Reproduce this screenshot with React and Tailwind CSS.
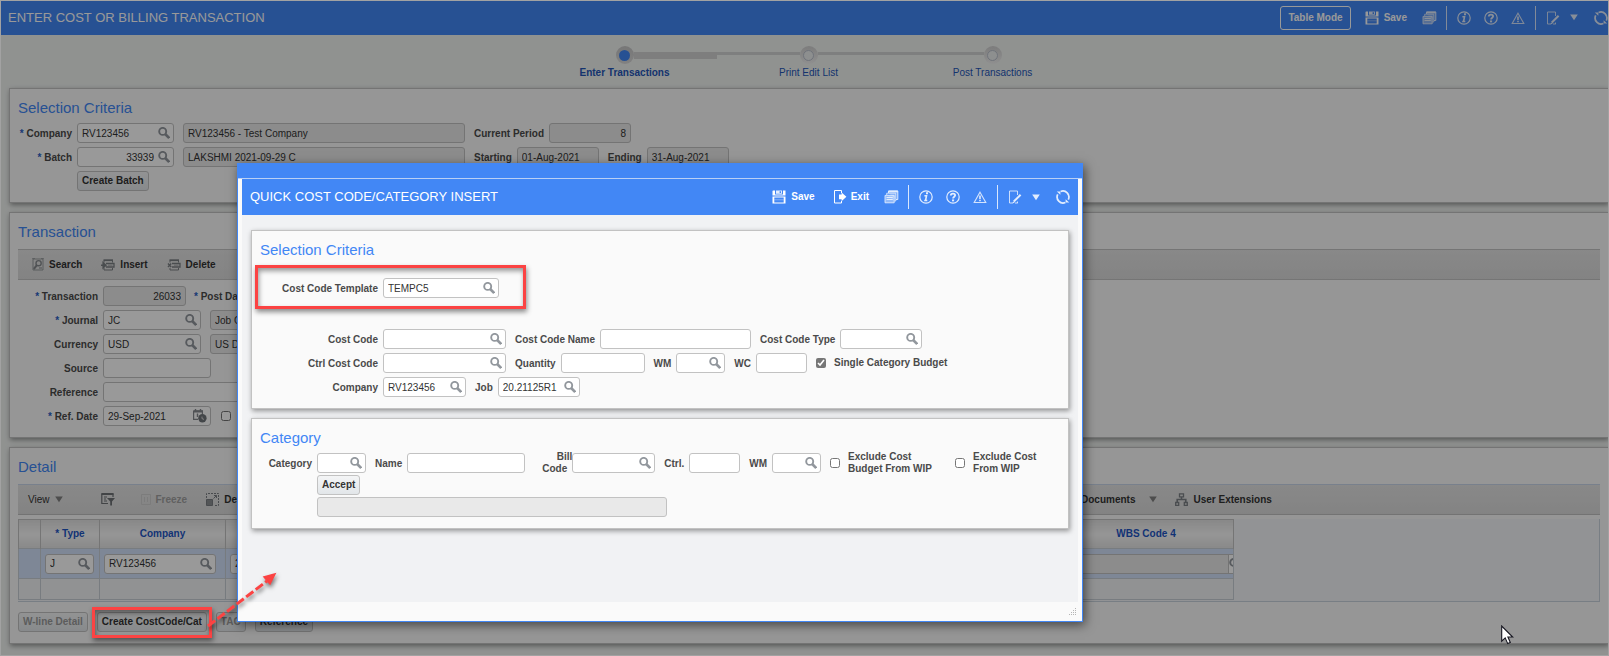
import React, { useId } from "react";

/* ---------- icons ---------- */

function SearchIcon() {
  return (
    <svg width="12" height="12" viewBox="0 0 12 12" fill="none" stroke="#92979d" aria-hidden="true">
      <circle cx="4.7" cy="4.4" r="3.5" strokeWidth="1.9" />
      <path d="M7.2 7 L11.2 11" strokeWidth="2.600" />
    </svg>
  );
}

function SaveIcon() {
  return (
    <svg width="14" height="14" viewBox="0 0 14 14" fill="currentColor" aria-hidden="true">
      <path d="M0.500 1 L1 0.500 H3 V4.6 H11 V0.500 H13.500 V5.6 H0.500 Z" />
      <path d="M4 0.500 H10 V3.8 H4 Z M7.6 1.2 V3 H9 V1.2 Z" fillRule="evenodd" opacity="0.85" />
      <path d="M0.500 6.6 H13.500 V13.500 H0.500 Z M2.3 7.6 V12.4 H11.700 V7.6 Z" fillRule="evenodd" />
      <path d="M2.3 9.3 H11.700 V10.3 H2.3 Z" opacity="0.35" />
    </svg>
  );
}

function ExitIcon() {
  return (
    <svg width="14" height="14" viewBox="0 0 14 14" aria-hidden="true">
      <path d="M8.5 3 V0.5 H1.5 V13 H8.5 V11" fill="none" stroke="currentColor" strokeWidth="1" />
      <path d="M6 4.4 H8.6 V2.4 L13.4 6.8 L8.6 11.2 V9.2 H6 Z" fill="currentColor" />
    </svg>
  );
}

function StackIcon() {
  return (
    <svg width="15" height="14" viewBox="0 0 15 14" fill="none" stroke="currentColor" aria-hidden="true">
      <path d="M4.5 3 V1 H13.8 V9.5 H12" fill="currentColor" fillOpacity="0.25" />
      <path d="M4.5 1.5 H13.8" strokeWidth="1.8" />
      <path d="M2.700 5 V3.2 H11.800 V11 H10.500" fill="currentColor" fillOpacity="0.2" strokeOpacity="0.8" />
      <path d="M1 5.4 H10.2 V12.8 H1 Z" fill="currentColor" fillOpacity="0.5" strokeOpacity="0.85" />
      <path d="M2.500 7.5 H8.8 M2.500 9.5 H8.8" />
    </svg>
  );
}

function InfoIcon() {
  return (
    <svg width="14" height="14" viewBox="0 0 14 14" fill="none" stroke="currentColor" aria-hidden="true">
      <circle cx="7" cy="7" r="6.2" strokeWidth="1.2" />
      <path d="M5.4 5.7 H7.5 L6.6 10.4 M5.2 10.5 H8.300" strokeWidth="1.6" />
      <path d="M7 3.300 H9" strokeWidth="2" />
    </svg>
  );
}

function HelpIcon() {
  return (
    <svg width="14" height="14" viewBox="0 0 14 14" fill="none" stroke="currentColor" aria-hidden="true">
      <circle cx="7" cy="7" r="6.2" strokeWidth="1.2" />
      <path d="M4.8 5.600 C4.8 3 9.2 3.1 9.1 5.3 C9.1 6.8 7.1 6.6 7.1 8.6" strokeWidth="1.9" />
      <path d="M6 10.4 H8.1" strokeWidth="1.9" />
    </svg>
  );
}

function WarnIcon() {
  return (
    <svg width="14" height="14" viewBox="0 0 14 14" fill="none" stroke="currentColor" aria-hidden="true">
      <path d="M7 2.2 L12.800 12.5 H1.2 Z" strokeWidth="1.1" strokeOpacity="0.9" />
      <path d="M7 5.6 V9.2 M7 10 V11.3" strokeWidth="1.6" />
    </svg>
  );
}

function EditIcon() {
  return (
    <svg width="14" height="14" viewBox="0 0 14 14" fill="none" stroke="currentColor" aria-hidden="true">
      <path d="M9.5 5 V1 H1.500 V13 H5 M9.5 13 V11.5 M7 13 H9.8" strokeWidth="1" strokeOpacity="0.85" />
      <path d="M5.8 11.5 L12.6 4.700" strokeWidth="2" />
      <path d="M4.8 12.6 L6.4 12" strokeWidth="1.2" />
    </svg>
  );
}

function CaretIcon() {
  return (
    <svg width="8" height="7" viewBox="0 0 8 7" fill="currentColor" aria-hidden="true">
      <path d="M0.2 0.5 H7.8 L4 6.3 Z" />
    </svg>
  );
}

function RefreshIcon() {
  return (
    <svg width="14" height="14" viewBox="0 0 14 14" fill="none" stroke="currentColor" aria-hidden="true">
      <path d="M4.600 1.5 A6 6 0 0 1 12.3 9.6" strokeWidth="1.7" />
      <path d="M9.400 12.5 A6 6 0 0 1 1.7 4.4" strokeWidth="1.7" />
      <path d="M0.8 1.4 H4.4 V4.8 Z M13.200 12.6 H9.6 V9.2 Z" fill="currentColor" stroke="none" />
    </svg>
  );
}

function FindIcon() {
  return (
    <svg width="12" height="13" viewBox="0 0 12 13" fill="none" stroke="#85898d" aria-hidden="true">
      <path d="M1 1 H11 V12 H1 Z" strokeOpacity="0.8" />
      <path d="M0 0.500 H3 M9 0.500 H12" strokeOpacity="0.6" />
      <circle cx="6.6" cy="5.2" r="2.6" strokeWidth="1.4" />
      <path d="M4.9 7.2 L1.8 11" strokeWidth="2" />
      <path d="M7 10 H10" />
    </svg>
  );
}

function RowsIcon({ remove }) {
  return (
    <svg width="14" height="12" viewBox="0 0 14 12" fill="none" stroke="#7c8084" aria-hidden="true">
      <path d="M3 3.5 V1.5 H11.5 V3.5 M3 9 V11 H11.5 V9" />
      <path d="M2.5 1.2 H12" strokeWidth="1.8" />
      <path d="M5 4.5 H13 V8 H5" strokeWidth="1.3" />
      <path d="M7 6.2 H11.500" strokeOpacity="0.6" />
      {remove ? <path d="M1 4.500 L4.200 8 M4.200 4.500 L1 8" strokeWidth="1.4" /> : <path d="M0 6.2 H4 M2.200 3.8 L4.8 6.2 L2.200 8.6 Z" strokeWidth="1.6" />}
    </svg>
  );
}

function FilterIcon() {
  return (
    <svg width="14" height="13" viewBox="0 0 14 13" fill="none" stroke="#6e7276" aria-hidden="true">
      <path d="M12 4 V1 H0.8 V10.5 H7" strokeWidth="1.2" />
      <path d="M0.5 1 H12.5" strokeWidth="2" />
      <path d="M3 4 H6 M3 6 H5 M3 8 H6" />
      <path d="M6 5 H14 L11 8.5 V12.5 H9.2 V8.5 Z" fill="#6e7276" stroke="none" />
    </svg>
  );
}

function FreezeIcon() {
  return (
    <svg width="10" height="11" viewBox="0 0 10 11" fill="none" stroke="#cfcfcf" aria-hidden="true">
      <path d="M0.5 0.5 H9.5 V10.5 H0.5 Z M3.5 3 V8 M6.5 3 V8" />
    </svg>
  );
}

function DetachIcon() {
  return (
    <svg width="13" height="13" viewBox="0 0 13 13" fill="none" stroke="#7a7e82" aria-hidden="true">
      <path d="M0.5 5 V0.5 H12.5 V12.5 H8" strokeDasharray="2 1" />
      <path d="M0.5 6.5 H6.5 V12.5 H0.5 Z" fill="#8a8e92" />
      <path d="M7.5 5.5 L10.5 2.5 M8 2.5 H10.5 V5" />
    </svg>
  );
}

function TreeIcon() {
  return (
    <svg width="13" height="13" viewBox="0 0 13 13" fill="none" stroke="#7c8085" aria-hidden="true">
      <path d="M4.5 0.8 H8.5 V3.8 H4.5 Z M0.7 9.5 H3.7 V12.4 H0.7 Z M9.3 9.5 H12.3 V12.4 H9.3 Z" strokeWidth="1.3" />
      <path d="M6.5 4 V6.5 M2.200 9 V6.5 H10.800 V9" strokeWidth="1.6" />
    </svg>
  );
}

function CalendarIcon() {
  return (
    <svg width="14" height="14" viewBox="0 0 14 14" fill="none" stroke="#85898e" aria-hidden="true">
      <path d="M0.6 1.8 H9.4 V5 M0.6 1.8 V10.4 H5" strokeWidth="1.2" />
      <path d="M0.5 2.5 H9.5" strokeWidth="1.8" />
      <path d="M2.5 0 V2 M7.5 0 V2 M4.5 4.5 V8" strokeWidth="1.4" />
      <circle cx="9.4" cy="9.300" r="4.2" fill="#70757a" stroke="none" />
      <path d="M9 7.6 V9.600 L11 10.4" stroke="#d8d8d8" />
    </svg>
  );
}

/* ---------- form parts ---------- */

const boxBase = "flex h-5 shrink-0 items-center overflow-hidden rounded-[3px] border border-[#c2c2c2]";

function Box({ id, label, width, value = "", icon, readOnly, alignRight }) {
  return (
    <div className={`${boxBase} ${width} ${readOnly ? "bg-[#e9e9e9]" : "bg-white"}`}>
      <input
        id={id}
        aria-label={label}
        defaultValue={value}
        readOnly={readOnly}
        className={`h-full w-full min-w-0 flex-1 bg-transparent px-1 text-[10px] text-[#333] outline-none ${alignRight ? "text-right" : ""}`}
      />
      {icon && (
        <button type="button" aria-label="Look up" className="mr-[3px] shrink-0">
          {icon === "date" ? <CalendarIcon /> : <SearchIcon />}
        </button>
      )}
    </div>
  );
}

function Field({ label, labelWidth = "", required, ...box }) {
  const id = useId();
  return (
    <div className="flex shrink-0 items-center gap-[5px]">
      <label htmlFor={id} className={`pt-px text-right font-bold whitespace-nowrap text-[#4a4a4a] ${labelWidth}`}>
        {required && <span className="text-[#2b5fc4]">* </span>}
        {label}
      </label>
      <Box id={id} {...box} />
    </div>
  );
}

function Check({ label, name, checked, width = "" }) {
  const id = useId();
  return (
    <div className="flex shrink-0 items-center gap-2">
      <input id={id} type="checkbox" aria-label={name} defaultChecked={checked} className="size-[10px] accent-[#767676]" />
      {label && (
        <label htmlFor={id} className={`leading-3 font-bold text-[#4a4a4a] ${width}`}>
          {label}
        </label>
      )}
    </div>
  );
}

function PushButton({ children, faded }) {
  return (
    <button
      type="button"
      className={`h-5 shrink-0 rounded-[3px] border border-[#c2c2c2] bg-linear-to-b from-[#f4f5f6] to-[#e2e6e9] px-1 font-bold whitespace-nowrap ${faded ? "text-[#9a9a9a]" : "text-[#333]"}`}
    >
      {children}
    </button>
  );
}

function Panel({ title, edge = "border", children }) {
  return (
    <section className={`${edge} border-[#c2c2c2] bg-[#fafafa] px-2 pt-[9px] pb-[11px] shadow-[1px_2px_5px_rgba(0,0,0,0.4)]`}>
      <h2 className="h-5 text-[15px] leading-5 text-[#4287f5]">{title}</h2>
      {children}
    </section>
  );
}

function IconButton({ label, children }) {
  return (
    <button type="button" aria-label={label} className="shrink-0 opacity-85">
      {children}
    </button>
  );
}

function Divider() {
  return <span className="h-6 w-px shrink-0 bg-white/80" />;
}

function HeaderTools() {
  return (
    <>
      <IconButton label="Records">
        <StackIcon />
      </IconButton>
      <span className="w-[9px]" />
      <Divider />
      <span className="w-[10px]" />
      <div className="flex items-center gap-[13px]">
        <IconButton label="Information">
          <InfoIcon />
        </IconButton>
        <IconButton label="Help">
          <HelpIcon />
        </IconButton>
        <IconButton label="Warnings">
          <WarnIcon />
        </IconButton>
      </div>
      <span className="w-[10px]" />
      <Divider />
      <span className="w-[10px]" />
      <IconButton label="Edit">
        <EditIcon />
      </IconButton>
      <span className="w-[10px]" />
      <IconButton label="More">
        <CaretIcon />
      </IconButton>
      <span className="w-4" />
      <IconButton label="Refresh">
        <RefreshIcon />
      </IconButton>
    </>
  );
}

function ToolItem({ icon, children, faded }) {
  return (
    <button type="button" className={`flex items-center gap-[5px] font-bold whitespace-nowrap ${faded ? "text-[#a0a0a0]" : "text-[#333]"}`}>
      {icon}
      {children}
    </button>
  );
}

/* ---------- page parts ---------- */

function Step({ label, current, left, right }) {
  return (
    <li className="w-[184px] text-center">
      <div className="flex h-[18px] items-center">
        <span className={`flex-1 ${left}`} />
        <span
          className={`flex size-[18px] items-center justify-center rounded-full bg-linear-to-b ${current ? "from-[#c6c6c6] to-[#d8d8d8]" : "from-[#cfcfcf] to-[#efefef]"}`}
        >
          <span className={current ? "size-[11px] rounded-full bg-[#4287f5]" : "size-[11px] rounded-full border border-[#b9c0cc] bg-[#eceeef]"} />
        </span>
        <span className={`flex-1 ${right}`} />
      </div>
      <a href="#" className={`block pt-px leading-4 text-[#2456b8] ${current ? "font-bold" : ""}`}>
        {label}
      </a>
    </li>
  );
}

function Stepper() {
  const thin = "mb-1 h-[3px] bg-[#d2d4d4]";
  return (
    <ol className="flex h-[53px] justify-center pt-[11px] pl-2">
      <Step label="Enter Transactions" current left="" right="h-[7px] bg-[#d2d2d2]" />
      <Step label="Print Edit List" left={thin} right={thin} />
      <Step label="Post Transactions" left={thin} right="" />
    </ol>
  );
}

function DetailTable() {
  const head = "border-x border-[#c4c4c4] bg-linear-to-b from-[#e4e4e4] via-[#fafafa] to-[#e4e4e4] text-center font-bold text-[#1d55c4]";
  const cell = "border border-[#c9cfd6] px-1 py-0";
  return (
    <div className="mt-1 h-[83px] border-r border-b border-[#c9d2dc] bg-[#f4f6f8]">
      <table className="w-[1215px] table-fixed border-collapse border border-[#c4c4c4]">
        <colgroup>
          <col className="w-[22px]" />
          <col className="w-[59px]" />
          <col className="w-[126px]" />
          <col className="w-[833px]" />
          <col className="w-[175px]" />
        </colgroup>
        <thead>
          <tr className="h-[29px]">
            <th className={head} />
            <th className={head}>* Type</th>
            <th className={head}>Company</th>
            <th className={head} />
            <th className={head}>WBS Code 4</th>
          </tr>
        </thead>
        <tbody>
          <tr className="h-[30px] bg-[#d3e1fa]">
            <td className={cell} />
            <td className={cell}>
              <Box label="Type" width="w-[49px]" value="J" icon="search" />
            </td>
            <td className={cell}>
              <Box label="Company" width="w-[112px]" value="RV123456" icon="search" />
            </td>
            <td className={cell}>
              <Box label="Job" width="w-[112px]" value="20.21125R1" icon="search" />
            </td>
            <td className="border border-[#c9cfd6] p-0">
              <div className="flex overflow-hidden">
                <input aria-label="WBS Code 4" readOnly className="h-5 min-w-0 flex-1 border border-[#c2c2c2] bg-[#e9e9e9]" />
                <button type="button" aria-label="Look up" className="flex h-5 w-1 items-center overflow-hidden border-y border-[#c2c2c2] bg-white">
                  <span className="shrink-0">
                    <SearchIcon />
                  </span>
                </button>
              </div>
            </td>
          </tr>
          <tr className="h-[21px] bg-[#f2f4f5]">
            <td className={cell} />
            <td className={cell} />
            <td className={cell} />
            <td className={cell} />
            <td className={cell} />
          </tr>
        </tbody>
      </table>
    </div>
  );
}

function QuickInsertDialog() {
  return (
    <div
      role="dialog"
      aria-label="Quick cost code/category insert"
      className="absolute top-[162px] left-[236px] z-20 w-[846px] border border-t-0 border-[#4287f5] bg-[#fafafa] shadow-[2px_3px_10px_rgba(0,0,0,0.55)]"
    >
      <div className="h-4 border-b border-[#b9d0f5] bg-[#4287f5]" />
      <div className="mx-1">
        <header className="flex h-9 items-center bg-[#4287f5] px-2 text-white">
          <h1 className="text-[13px]">QUICK COST CODE/CATEGORY INSERT</h1>
          <span className="flex-1" />
          <button type="button" className="flex items-center gap-[5px] font-bold">
            <SaveIcon />
            Save
          </button>
          <span className="w-[18px]" />
          <button type="button" className="flex items-center gap-1 font-bold">
            <ExitIcon />
            Exit
          </button>
          <span className="w-[15px]" />
          <HeaderTools />
        </header>
        <div className="flex flex-col gap-[9px] bg-[#f1f2f4] px-[9px] pt-[15px] pb-[73px]">
          <Panel title="Selection Criteria">
            <div className="relative mt-[18px] flex">
              <Field label="Cost Code Template" labelWidth="w-[118px]" width="w-[116px]" value="TEMPC5" icon="search" />
              <span className="pointer-events-none absolute -top-[13px] -left-[5px] h-11 w-[271px] border-[3px] border-[#fb4343] shadow-[1px_3px_5px_rgba(0,0,0,0.45),inset_1px_3px_5px_rgba(0,0,0,0.4)]" />
            </div>
            <div className="mt-[31px] flex flex-col gap-1">
              <div className="flex gap-[9px]">
                <Field label="Cost Code" labelWidth="w-[118px]" width="w-[123px]" icon="search" />
                <Field label="Cost Code Name" width="w-[151px]" />
                <Field label="Cost Code Type" width="w-[82px]" icon="search" />
              </div>
              <div className="flex gap-[9px]">
                <Field label="Ctrl Cost Code" labelWidth="w-[118px]" width="w-[123px]" icon="search" />
                <Field label="Quantity" width="w-[84px]" />
                <Field label="WM" width="w-[49px]" icon="search" />
                <Field label="WC" width="w-[51px]" />
                <Check label="Single Category Budget" checked />
              </div>
              <div className="flex gap-[9px]">
                <Field label="Company" labelWidth="w-[118px]" width="w-[83px]" value="RV123456" icon="search" />
                <Field label="Job" width="w-[82px]" value="20.21125R1" icon="search" />
              </div>
            </div>
          </Panel>
          <Panel title="Category">
            <div className="mt-[5px] flex h-5 items-center gap-[9px]">
              <Field label="Category" labelWidth="w-[52px]" width="w-[49px]" icon="search" />
              <Field label="Name" width="w-[118px]" />
              <div className="ml-2 flex items-center">
                <label htmlFor="bill-code" className="w-[30px] text-right leading-3 font-bold text-[#4a4a4a]">
                  Bill
                  <span className="block pr-[5px]">Code</span>
                </label>
                <Box id="bill-code" width="w-[83px]" icon="search" />
              </div>
              <Field label="Ctrl." width="w-[51px]" />
              <Field label="WM" width="w-[49px]" icon="search" />
              <Check label="Exclude Cost Budget From WIP" width="w-[98px]" />
              <Check label="Exclude Cost From WIP" width="w-[76px]" />
            </div>
            <div className="mt-[2px] flex flex-col items-start gap-[2px] pl-[57px]">
              <PushButton>Accept</PushButton>
              <Box label="Message" width="w-[350px]" readOnly />
            </div>
          </Panel>
        </div>
      </div>
      <footer className="flex h-[19px] items-center justify-end pr-[5px]">
        <svg width="8" height="8" viewBox="0 0 8 8" fill="#b5b5b5" aria-hidden="true">
          <path d="M6 0h1v1h-1z M6 2h1v1h-1z M6 4h1v1h-1z M6 6h1v1h-1z M4 4h1v1h-1z M4 6h1v1h-1z M2 6h1v1h-1z M0 6h1v1h-1z M2 4h1v1h-1z M4 2h1v1h-1z" />
        </svg>
      </footer>
    </div>
  );
}

export default function App() {
  const label = "w-[54px]";
  const wide = "w-[80px]";
  return (
    <div className="relative min-h-screen overflow-hidden border border-[#a2a2a2] bg-[#f0f3f1] font-['Liberation_Sans',Arial,sans-serif] text-[10px] leading-[14px]">
      <header className="flex h-[34px] items-center bg-[#4287f5] pb-px pl-[7px] text-white">
        <h1 className="text-[13px]">ENTER COST OR BILLING TRANSACTION</h1>
        <span className="flex-1" />
        <button type="button" className="h-6 rounded-[3px] border border-white px-[7px] font-bold">
          Table Mode
        </button>
        <span className="w-[14px]" />
        <button type="button" className="flex items-center gap-[5px] font-bold">
          <SaveIcon />
          Save
        </button>
        <span className="w-[15px]" />
        <HeaderTools />
      </header>

      <Stepper />

      <main className="flex flex-col gap-[9px] pb-[11px] pl-2">
        <Panel title="Selection Criteria" edge="border border-r-0">
          <div className="mt-[5px] flex flex-col items-start gap-1">
            <div className="flex gap-[9px]">
              <Field label="Company" required labelWidth={label} width="w-[97px]" value="RV123456" icon="search" />
              <Box label="Company name" width="w-[282px]" value="RV123456 - Test Company" readOnly />
              <Field label="Current Period" width="w-[82px]" value="8" readOnly alignRight />
            </div>
            <div className="flex gap-[9px]">
              <Field label="Batch" required labelWidth={label} width="w-[97px]" value="33939" icon="search" alignRight />
              <Box label="Batch name" width="w-[282px]" value="LAKSHMI 2021-09-29 C" readOnly />
              <Field label="Starting" width="w-[82px]" value="01-Aug-2021" readOnly />
              <Field label="Ending" width="w-[82px]" value="31-Aug-2021" readOnly />
            </div>
            <div className="pl-[59px]">
              <PushButton>Create Batch</PushButton>
            </div>
          </div>
        </Panel>

        <Panel title="Transaction" edge="border border-r-0">
          <div className="mt-[7px] flex h-[31px] items-center gap-[19px] border-y border-[#c4c4c4] bg-linear-to-b from-[#e4e4e4] to-[#dbdbdb] pl-[14px]">
            <ToolItem icon={<FindIcon />}>Search</ToolItem>
            <ToolItem icon={<RowsIcon />}>Insert</ToolItem>
            <ToolItem icon={<RowsIcon remove />}>Delete</ToolItem>
          </div>
          <div className="mt-[6px] flex flex-col gap-1">
            <div className="flex gap-2">
              <Field label="Transaction" required labelWidth={wide} width="w-[83px]" value="26033" readOnly alignRight />
              <Field label="Post Date" required width="w-[108px]" />
            </div>
            <div className="flex gap-[9px]">
              <Field label="Journal" required labelWidth={wide} width="w-[98px]" value="JC" icon="search" />
              <Box label="Journal name" width="w-[282px]" value="Job Cost" readOnly />
            </div>
            <div className="flex gap-[9px]">
              <Field label="Currency" labelWidth={wide} width="w-[98px]" value="USD" icon="search" />
              <Box label="Currency name" width="w-[282px]" value="US Dollar" readOnly />
            </div>
            <Field label="Source" labelWidth={wide} width="w-[108px]" />
            <Field label="Reference" labelWidth={wide} width="w-[282px]" />
            <div className="flex items-center gap-[10px]">
              <Field label="Ref. Date" required labelWidth={wide} width="w-[108px]" value="29-Sep-2021" icon="date" />
              <Check name="Use reference date" />
            </div>
          </div>
        </Panel>

        <Panel title="Detail" edge="border border-r-0">
          <div className="mt-[7px] flex h-[31px] items-center border-t border-b border-t-[#c8d6ea] border-b-[#c0c0c0] bg-linear-to-b from-[#e4e4e4] to-[#dbdbdb] text-[#333]">
            <div className="flex w-[1063px] shrink-0 items-center pl-[10px]">
              <button type="button" className="flex items-center gap-[5px]">
                View
                <span className="text-[#808080]">
                  <CaretIcon />
                </span>
              </button>
              <span className="w-[38px]" />
              <button type="button" aria-label="Filter">
                <FilterIcon />
              </button>
              <span className="w-[26px]" />
              <ToolItem icon={<FreezeIcon />} faded>
                Freeze
              </ToolItem>
              <span className="w-[19px]" />
              <ToolItem icon={<DetachIcon />}>Detach</ToolItem>
            </div>
            <button type="button" className="flex items-center gap-[14px] font-bold">
              Documents
              <span className="text-[#808080]">
                <CaretIcon />
              </span>
            </button>
            <span className="w-[18px]" />
            <ToolItem icon={<TreeIcon />}>User Extensions</ToolItem>
          </div>
          <DetailTable />
          <div className="mt-[10px] flex gap-[9px]">
            <PushButton faded>W-line Detail</PushButton>
            <div className="relative flex">
              <PushButton>Create CostCode/Cat</PushButton>
              <span className="pointer-events-none absolute -inset-x-[5px] -top-[5px] -bottom-[6px] z-30 border-[3px] border-[#fb4343] shadow-[1px_3px_5px_rgba(0,0,0,0.45),inset_1px_3px_5px_rgba(0,0,0,0.4)]" />
            </div>
            <PushButton faded>TAC</PushButton>
            <PushButton>Reference</PushButton>
          </div>
        </Panel>
      </main>

      <div className="absolute inset-0 z-10 bg-black/40" />

      <QuickInsertDialog />

      {/* callout arrow from the button to the dialog */}
      <svg className="pointer-events-none absolute top-[562px] left-[200px] z-30 drop-shadow-[1px_3px_2px_rgba(0,0,0,0.5)]" width="84" height="72" viewBox="0 0 84 72" aria-hidden="true">
        <path d="M7 63 L66 18" stroke="#fb4343" strokeWidth="3" strokeDasharray="9 3" fill="none" />
        <path d="M74 11 L69 21 L63 14 Z" fill="#fb4343" stroke="#fb4343" strokeWidth="1.500" />
      </svg>

      {/* pointer */}
      <svg className="pointer-events-none absolute top-[624px] left-[1500px] z-30" width="13" height="20" viewBox="0 0 13 20" aria-hidden="true">
        <path d="M0.7 1 V16.200 L4.200 12.900 L6.700 18.600 L9.300 17.500 L6.900 12 H11.700 Z" fill="#fff" stroke="#15151f" strokeWidth="1.100" />
      </svg>
    </div>
  );
}
